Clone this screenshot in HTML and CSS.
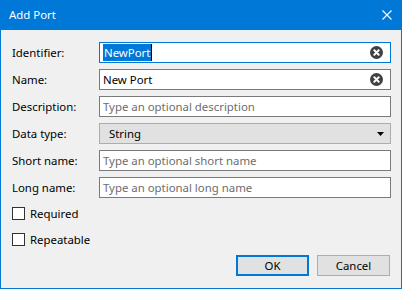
FILE: index.html
```html
<!DOCTYPE html>
<html>
<head>
<meta name="viewport" content="width=device-width, initial-scale=1">
<link rel="stylesheet" href="styles.css">
</head>
<body>

<div class="window">
  <div class="titlebar">
    <span class="title">Add Port</span>
    <svg class="close" width="10" height="10" viewBox="0 0 10 10">
      <path d="M0.5 0.5 L9.5 9.5 M9.5 0.5 L0.5 9.5" stroke="#ffffff" stroke-width="1.1" fill="none"/>
    </svg>
  </div>

  <div class="content">
    <div class="fields">
      <div class="label">Identifier:</div>
      <div class="field focused">
        <span class="value"><span class="selected">NewPort</span><span class="caret"></span></span>
        <svg class="clear" width="13" height="13" viewBox="0 0 13 13">
          <circle cx="6.5" cy="6.5" r="6.5" fill="#404040"/>
          <path d="M4.3 4.3 L8.7 8.7 M8.7 4.3 L4.3 8.7" stroke="#ffffff" stroke-width="2" stroke-linecap="round"/>
        </svg>
      </div>

      <div class="label">Name:</div>
      <div class="field">
        <span class="value">New Port</span>
        <svg class="clear" width="13" height="13" viewBox="0 0 13 13">
          <circle cx="6.5" cy="6.5" r="6.5" fill="#404040"/>
          <path d="M4.3 4.3 L8.7 8.7 M8.7 4.3 L4.3 8.7" stroke="#ffffff" stroke-width="2" stroke-linecap="round"/>
        </svg>
      </div>

      <div class="label">Description:</div>
      <div class="field"><span class="placeholder">Type an optional description</span></div>

      <div class="label">Data type:</div>
      <div class="field combo">
        <span class="value">String</span>
        <svg class="arrow" width="7" height="4" viewBox="0 0 7 4">
          <path d="M0 0 L7 0 L3.5 4 Z" fill="#000000"/>
        </svg>
      </div>

      <div class="label">Short name:</div>
      <div class="field"><span class="placeholder">Type an optional short name</span></div>

      <div class="label">Long name:</div>
      <div class="field"><span class="placeholder">Type an optional long name</span></div>
    </div>

    <div class="checks">
      <div class="check"><span class="box"></span>Required</div>
      <div class="check"><span class="box"></span>Repeatable</div>
    </div>

    <div class="buttons">
      <div class="button default">OK</div>
      <div class="button">Cancel</div>
    </div>
  </div>
</div>

</body>
</html>
```

FILE: styles.css
```css
body {
  margin: 0;
  font-family: "Noto Sans", "Open Sans", sans-serif;
  font-size: 11.4px;
  color: #000000;
}

.window {
  width: 402px;
  height: 289px;
  box-sizing: border-box;
  background: #f0f0f0;
  border: 1px solid #0078d7;
  border-top: none;
  display: flex;
  flex-direction: column;
}

.titlebar {
  height: 30px;
  margin: 0 -1px;
  background: #0078d7;
  color: #ffffff;
  display: flex;
  align-items: center;
  justify-content: space-between;
  padding: 0 10px 0 9px;
}

.title {
  line-height: 16px;
  padding-bottom: 1px;
}

.close {
  display: block;
}

.content {
  padding: 12px 10px 0 11px;
}

.fields {
  display: grid;
  grid-template-columns: 87px 1fr;
  grid-auto-rows: 21px;
  row-gap: 6px;
}

.label {
  display: flex;
  align-items: center;
}

.field {
  box-sizing: border-box;
  border: 1px solid #7a7a7a;
  background: #ffffff;
  display: flex;
  align-items: center;
  padding: 0 7px 0 2px;
  white-space: nowrap;
}

.field.focused {
  border-color: #0078d7;
}

.value {
  flex: 1;
  display: flex;
  align-items: center;
}

.selected {
  background: #0078d7;
  color: #ffffff;
  line-height: 17px;
  padding: 0 1px;
}

.caret {
  width: 1px;
  height: 17px;
  background: #000000;
}

.placeholder {
  color: #6d6d6d;
  padding-left: 1px;
}

.field .value {
  padding-left: 1px;
}

.clear {
  display: block;
}

.combo {
  background: #e1e1e1;
  border-color: #adadad;
  padding: 0 6px 0 8px;
}

.arrow {
  display: block;
}

.checks {
  display: flex;
  flex-direction: column;
  gap: 13px;
  margin-top: 9px;
}

.check {
  display: flex;
  align-items: center;
  height: 13px;
}

.box {
  width: 13px;
  height: 13px;
  box-sizing: border-box;
  border: 1px solid #333333;
  background: #ffffff;
  margin-right: 5px;
}

.buttons {
  display: flex;
  justify-content: flex-end;
  gap: 8px;
  margin-top: 9px;
  padding-right: 1px;
}

.button {
  width: 73px;
  height: 21px;
  box-sizing: border-box;
  background: #e1e1e1;
  border: 1px solid #adadad;
  display: flex;
  align-items: center;
  justify-content: center;
}

.button.default {
  border: 2px solid #0078d7;
}
```
